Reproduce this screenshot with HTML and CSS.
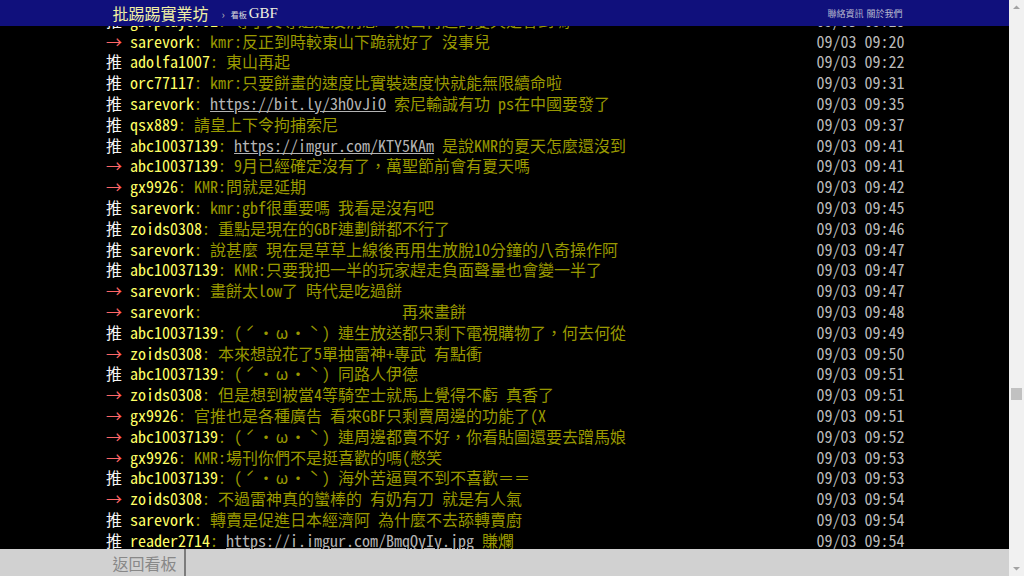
FILE: index.html
```html
<!DOCTYPE html>
<html lang="zh-Hant-TW">
<head>
  <meta charset="UTF-8">
  <title>[閒聊] GBF - 看板 GBF - 批踢踢實業坊</title>
  <link rel="stylesheet" href="styles.css">
</head>
<body>
  <div id="topbar-container">
    <div id="topbar" class="bbs-content">
      <a id="logo" href="#">批踢踢實業坊</a>
      <span class="sep">›</span>
      <a class="board" href="#"><span class="board-label">看板 </span>GBF</a>
      <div class="right">
        <a href="#">聯絡資訊</a>
        <a href="#">關於我們</a>
      </div>
    </div>
  </div>

  <div id="main-container">
    <div id="main-content" class="bbs-screen bbs-content">
      <div class="push"><span class="hl push-tag">推 </span><span class="f3 hl push-userid">gbfplayer01</span><span class="f3 push-content">: 等了又等還是沒消息，東山再起的夏天是會到嗎</span><span class="push-ipdatetime">09/03 09:18</span></div>
      <div class="push"><span class="f1 hl push-tag">→ </span><span class="f3 hl push-userid">sarevork</span><span class="f3 push-content">: kmr:反正到時較東山下跪就好了 沒事兒</span><span class="push-ipdatetime">09/03 09:20</span></div>
      <div class="push"><span class="hl push-tag">推 </span><span class="f3 hl push-userid">adolfa1007</span><span class="f3 push-content">: 東山再起</span><span class="push-ipdatetime">09/03 09:22</span></div>
      <div class="push"><span class="hl push-tag">推 </span><span class="f3 hl push-userid">orc77117</span><span class="f3 push-content">: kmr:只要餅畫的速度比實裝速度快就能無限續命啦</span><span class="push-ipdatetime">09/03 09:31</span></div>
      <div class="push"><span class="hl push-tag">推 </span><span class="f3 hl push-userid">sarevork</span><span class="f3 push-content">: <a href="#">https://bit.ly/3h0vJiO</a> 索尼輸誠有功 ps在中國要發了</span><span class="push-ipdatetime">09/03 09:35</span></div>
      <div class="push"><span class="hl push-tag">推 </span><span class="f3 hl push-userid">qsx889</span><span class="f3 push-content">: 請皇上下令拘捕索尼</span><span class="push-ipdatetime">09/03 09:37</span></div>
      <div class="push"><span class="hl push-tag">推 </span><span class="f3 hl push-userid">abc10037139</span><span class="f3 push-content">: <a href="#">https://imgur.com/KTY5KAm</a> 是說KMR的夏天怎麼還沒到</span><span class="push-ipdatetime">09/03 09:41</span></div>
      <div class="push"><span class="f1 hl push-tag">→ </span><span class="f3 hl push-userid">abc10037139</span><span class="f3 push-content">: 9月已經確定沒有了，萬聖節前會有夏天嗎</span><span class="push-ipdatetime">09/03 09:41</span></div>
      <div class="push"><span class="f1 hl push-tag">→ </span><span class="f3 hl push-userid">gx9926</span><span class="f3 push-content">: KMR:問就是延期</span><span class="push-ipdatetime">09/03 09:42</span></div>
      <div class="push"><span class="hl push-tag">推 </span><span class="f3 hl push-userid">sarevork</span><span class="f3 push-content">: kmr:gbf很重要嗎 我看是沒有吧</span><span class="push-ipdatetime">09/03 09:45</span></div>
      <div class="push"><span class="hl push-tag">推 </span><span class="f3 hl push-userid">zoids0308</span><span class="f3 push-content">: 重點是現在的GBF連劃餅都不行了</span><span class="push-ipdatetime">09/03 09:46</span></div>
      <div class="push"><span class="hl push-tag">推 </span><span class="f3 hl push-userid">sarevork</span><span class="f3 push-content">: 說甚麼 現在是草草上線後再用生放脫10分鐘的八奇操作阿</span><span class="push-ipdatetime">09/03 09:47</span></div>
      <div class="push"><span class="hl push-tag">推 </span><span class="f3 hl push-userid">abc10037139</span><span class="f3 push-content">: KMR:只要我把一半的玩家趕走負面聲量也會變一半了</span><span class="push-ipdatetime">09/03 09:47</span></div>
      <div class="push"><span class="f1 hl push-tag">→ </span><span class="f3 hl push-userid">sarevork</span><span class="f3 push-content">: 畫餅太low了 時代是吃過餅</span><span class="push-ipdatetime">09/03 09:47</span></div>
      <div class="push"><span class="f1 hl push-tag">→ </span><span class="f3 hl push-userid">sarevork</span><span class="f3 push-content">: 　　　　　　　　　　　　再來畫餅</span><span class="push-ipdatetime">09/03 09:48</span></div>
      <div class="push"><span class="hl push-tag">推 </span><span class="f3 hl push-userid">abc10037139</span><span class="f3 push-content">: (<span class="w">ˊ</span>・<span class="w">ω</span>・<span class="w">ˋ</span>) 連生放送都只剩下電視購物了，何去何從</span><span class="push-ipdatetime">09/03 09:49</span></div>
      <div class="push"><span class="f1 hl push-tag">→ </span><span class="f3 hl push-userid">zoids0308</span><span class="f3 push-content">: 本來想說花了5單抽雷神+專武 有點衝</span><span class="push-ipdatetime">09/03 09:50</span></div>
      <div class="push"><span class="hl push-tag">推 </span><span class="f3 hl push-userid">abc10037139</span><span class="f3 push-content">: (<span class="w">ˊ</span>・<span class="w">ω</span>・<span class="w">ˋ</span>) 同路人伊德</span><span class="push-ipdatetime">09/03 09:51</span></div>
      <div class="push"><span class="f1 hl push-tag">→ </span><span class="f3 hl push-userid">zoids0308</span><span class="f3 push-content">: 但是想到被當4等騎空士就馬上覺得不虧 真香了</span><span class="push-ipdatetime">09/03 09:51</span></div>
      <div class="push"><span class="f1 hl push-tag">→ </span><span class="f3 hl push-userid">gx9926</span><span class="f3 push-content">: 官推也是各種廣告 看來GBF只剩賣周邊的功能了(X</span><span class="push-ipdatetime">09/03 09:51</span></div>
      <div class="push"><span class="f1 hl push-tag">→ </span><span class="f3 hl push-userid">abc10037139</span><span class="f3 push-content">: (<span class="w">ˊ</span>・<span class="w">ω</span>・<span class="w">ˋ</span>) 連周邊都賣不好，你看貼圖還要去蹭馬娘</span><span class="push-ipdatetime">09/03 09:52</span></div>
      <div class="push"><span class="f1 hl push-tag">→ </span><span class="f3 hl push-userid">gx9926</span><span class="f3 push-content">: KMR:場刊你們不是挺喜歡的嗎(憋笑</span><span class="push-ipdatetime">09/03 09:53</span></div>
      <div class="push"><span class="hl push-tag">推 </span><span class="f3 hl push-userid">abc10037139</span><span class="f3 push-content">: (<span class="w">ˊ</span>・<span class="w">ω</span>・<span class="w">ˋ</span>) 海外苦逼買不到不喜歡＝＝</span><span class="push-ipdatetime">09/03 09:53</span></div>
      <div class="push"><span class="f1 hl push-tag">→ </span><span class="f3 hl push-userid">zoids0308</span><span class="f3 push-content">: 不過雷神真的蠻棒的 有奶有刀 就是有人氣</span><span class="push-ipdatetime">09/03 09:54</span></div>
      <div class="push"><span class="hl push-tag">推 </span><span class="f3 hl push-userid">sarevork</span><span class="f3 push-content">: 轉賣是促進日本經濟阿 為什麼不去舔轉賣廚</span><span class="push-ipdatetime">09/03 09:54</span></div>
      <div class="push"><span class="hl push-tag">推 </span><span class="f3 hl push-userid">reader2714</span><span class="f3 push-content">: <a href="#">https://i.imgur.com/BmqQyIy.jpg</a> 賺爛</span><span class="push-ipdatetime">09/03 09:54</span></div>
    </div>
  </div>

  <div id="action-bar-container">
    <div class="action-bar bbs-content">
      <a class="btn" href="#">返回看板</a>
    </div>
  </div>

  <!-- page scrollbar -->
  <div class="scrollbar">
    <svg class="arrow" width="15" height="15" viewBox="0 0 15 15"><path d="M4 9 L7.5 5.5 L11 9 Z" fill="#a3a3a3"/></svg>
    <div class="track"><div class="thumb"></div></div>
    <svg class="arrow" width="15" height="15" viewBox="0 0 15 15"><path d="M4 6 L7.5 9.5 L11 6 Z" fill="#a3a3a3"/></svg>
  </div>
</body>
</html>
```
FILE: styles.css
```css
body {
  margin: 0;
  padding-right: 15px;
  background-color: #000;
  color: #ccc;
  font-family: "Noto Sans Mono CJK TC", "Noto Sans CJK TC", "Liberation Mono", monospace;
}

a {
  color: inherit;
  text-decoration: none;
}

.bbs-content {
  width: 800px;
  margin: 0 auto;
  box-sizing: border-box;
}

/* top bar */
#topbar-container {
  position: fixed;
  top: 0;
  left: 0;
  right: 15px;
  z-index: 2;
  background-color: #10107c;
}

#topbar {
  height: 26px;
  display: flex;
  align-items: center;
  padding: 0 2px 0 8px;
}

#logo {
  font-size: 16px;
  color: #f0f0a4;
}

.sep {
  font-size: 11px;
  color: #bbb;
  margin: 1px 6px 0 13px;
}

.board {
  font-family: "Liberation Serif", serif;
  font-size: 15px;
  color: #f2f2e0;
}

.board-label {
  font-family: "Noto Sans CJK TC", sans-serif;
  font-size: 8px;
  color: #ddd;
}

.right {
  margin-left: auto;
  display: flex;
  gap: 3px;
  font-family: "Noto Sans CJK TC", sans-serif;
  font-size: 9px;
  color: #b8b8d0;
  padding-top: 1px;
}

/* pushes */
#main-content {
  padding: 9.8px 0 30px 1.5px;
  font-size: 16px;
  line-height: 20.8px;
}

.push {
  display: flex;
  white-space: pre;
}

.push-tag { color: #f4f4f4; }
.push-tag.f1 { color: #f66; }
.push-userid { color: #ff6; }
.push-content { color: #990; }

.push-content a {
  color: #b4b4b4;
  text-decoration: underline;
}

/* ambiguous-width chars take two columns, like in the terminal */
.push-content .w {
  display: inline-block;
  width: 16px;
  text-align: center;
}

.push-ipdatetime {
  margin-left: auto;
  color: #bbb;
}

/* bottom bar */
#action-bar-container {
  position: fixed;
  bottom: 0;
  left: 0;
  right: 15px;
  z-index: 2;
  background-color: #d1d1d1;
}

.action-bar {
  height: 27px;
  display: flex;
}

.btn {
  display: flex;
  align-items: center;
  padding: 0 7px 0 8px;
  font-family: "Noto Sans CJK TC", sans-serif;
  font-size: 16px;
  color: #888;
  border-right: 2px solid #7c7c7c;
}

/* scrollbar */
.scrollbar {
  position: fixed;
  top: 0;
  right: 0;
  bottom: 0;
  width: 15px;
  display: flex;
  flex-direction: column;
  background-color: #f1f1f1;
}

.arrow {
  display: block;
  flex: none;
}

.track {
  flex: 1;
  padding: 0 2px;
}

.thumb {
  margin-top: 373px;
  height: 12px;
  background-color: #c1c1c1;
}
```
